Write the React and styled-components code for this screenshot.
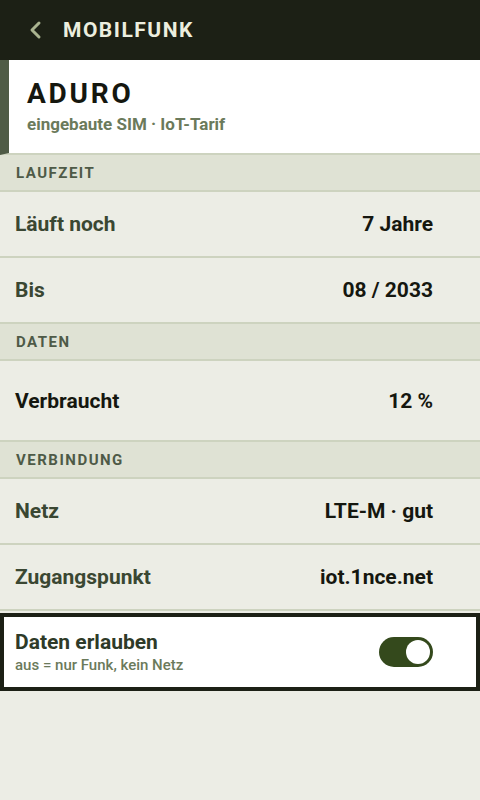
import React, { useState } from 'react';
import styled, { createGlobalStyle } from 'styled-components';

const GlobalStyle = createGlobalStyle`
  html, body {
    margin: 0;
    padding: 0;
    background: #ecede5;
    font-family: Roboto, "Liberation Sans", sans-serif;
  }
  * { box-sizing: border-box; }
`;

const Screen = styled.div`
  width: 480px;
  min-height: 800px;
  background: #ecede5;
  display: flex;
  flex-direction: column;
`;

const TopBar = styled.header`
  height: 60px;
  background: #1c2015;
  display: flex;
  align-items: center;
  padding-left: 28px;
  gap: 19px;
`;

const BackButton = styled.button`
  background: none;
  border: none;
  padding: 0;
  display: flex;
  align-items: center;
  cursor: pointer;
`;

const Title = styled.h1`
  margin: 0;
  color: #eceedf;
  font-size: 21px;
  font-weight: 700;
  letter-spacing: 1.5px;
`;

const DeviceCard = styled.div`
  background: #fff;
  border-left: 9px solid #4f5b46;
  border-bottom: 2px solid #cdd3bf;
  padding: 17px 18px 17px 18px;
  height: 95px;
`;

const DeviceName = styled.div`
  font-size: 28px;
  font-weight: 700;
  letter-spacing: 2.8px;
  color: #15170f;
  line-height: 34px;
`;

const DeviceSub = styled.div`
  margin-top: 3px;
  font-size: 17px;
  font-weight: 700;
  color: #6b7a5b;
`;

const SectionHead = styled.div`
  height: 37px;
  background: #dfe2d4;
  border-bottom: 2px solid #cdd3bf;
  display: flex;
  align-items: center;
  padding-left: 16px;
  font-size: 15px;
  font-weight: 700;
  letter-spacing: 1.5px;
  color: #4e5a47;
`;

const Row = styled.div`
  height: ${p => (p.$tall ? 81 : 66)}px;
  border-bottom: 2px solid #cdd3bf;
  display: flex;
  align-items: center;
  justify-content: space-between;
  padding: 0 47px 0 15px;
`;

const Label = styled.span`
  font-size: 21px;
  font-weight: 700;
  color: ${p => (p.$strong ? '#15170f' : '#3a4732')};
`;

const Value = styled.span`
  font-size: 21px;
  font-weight: 700;
  color: #15170f;
`;

const ToggleCard = styled.div`
  margin-top: 2px;
  background: #fff;
  border: 4px solid #1c2015;
  height: 78px;
  display: flex;
  align-items: center;
  justify-content: space-between;
  padding: 0 43px 0 11px;
`;

const ToggleText = styled.div`
  display: flex;
  flex-direction: column;
  gap: 2px;
`;

const ToggleLabel = styled.span`
  font-size: 21px;
  font-weight: 700;
  color: #2e3a28;
`;

const ToggleHint = styled.span`
  font-size: 15px;
  font-weight: 500;
  color: #6b7a5b;
`;

const Switch = styled.button`
  width: 54px;
  height: 30px;
  border-radius: 15px;
  border: none;
  padding: 3px;
  background: ${p => (p.$on ? '#34491c' : '#b6bca8')};
  display: flex;
  justify-content: ${p => (p.$on ? 'flex-end' : 'flex-start')};
  cursor: pointer;
`;

const Knob = styled.span`
  width: 24px;
  height: 24px;
  border-radius: 50%;
  background: #fff;
`;

const sections = [
  {
    title: 'LAUFZEIT',
    rows: [
      { label: 'Läuft noch', value: '7 Jahre' },
      { label: 'Bis', value: '08 / 2033' },
    ],
  },
  {
    title: 'DATEN',
    rows: [{ label: 'Verbraucht', value: '12 %', tall: true, strong: true }],
  },
  {
    title: 'VERBINDUNG',
    rows: [
      { label: 'Netz', value: 'LTE-M · gut' },
      { label: 'Zugangspunkt', value: 'iot.1nce.net' },
    ],
  },
];

export default function App() {
  const [dataOn, setDataOn] = useState(true);

  return (
    <Screen>
      <GlobalStyle />
      <TopBar>
        <BackButton aria-label="Zurück">
          <svg width="16" height="20" viewBox="0 0 16 20">
            <path d="M11 3 L4 10 L11 17" fill="none" stroke="#a9b38f" strokeWidth="3" strokeLinecap="round" strokeLinejoin="round" />
          </svg>
        </BackButton>
        <Title>MOBILFUNK</Title>
      </TopBar>

      <DeviceCard>
        <DeviceName>ADURO</DeviceName>
        <DeviceSub>eingebaute SIM · IoT-Tarif</DeviceSub>
      </DeviceCard>

      {sections.map(s => (
        <React.Fragment key={s.title}>
          <SectionHead>{s.title}</SectionHead>
          {s.rows.map(r => (
            <Row key={r.label} $tall={r.tall}>
              <Label $strong={r.strong}>{r.label}</Label>
              <Value>{r.value}</Value>
            </Row>
          ))}
        </React.Fragment>
      ))}

      <ToggleCard>
        <ToggleText>
          <ToggleLabel>Daten erlauben</ToggleLabel>
          <ToggleHint>aus = nur Funk, kein Netz</ToggleHint>
        </ToggleText>
        <Switch $on={dataOn} onClick={() => setDataOn(!dataOn)} aria-label="Daten erlauben">
          <Knob />
        </Switch>
      </ToggleCard>
    </Screen>
  );
}
